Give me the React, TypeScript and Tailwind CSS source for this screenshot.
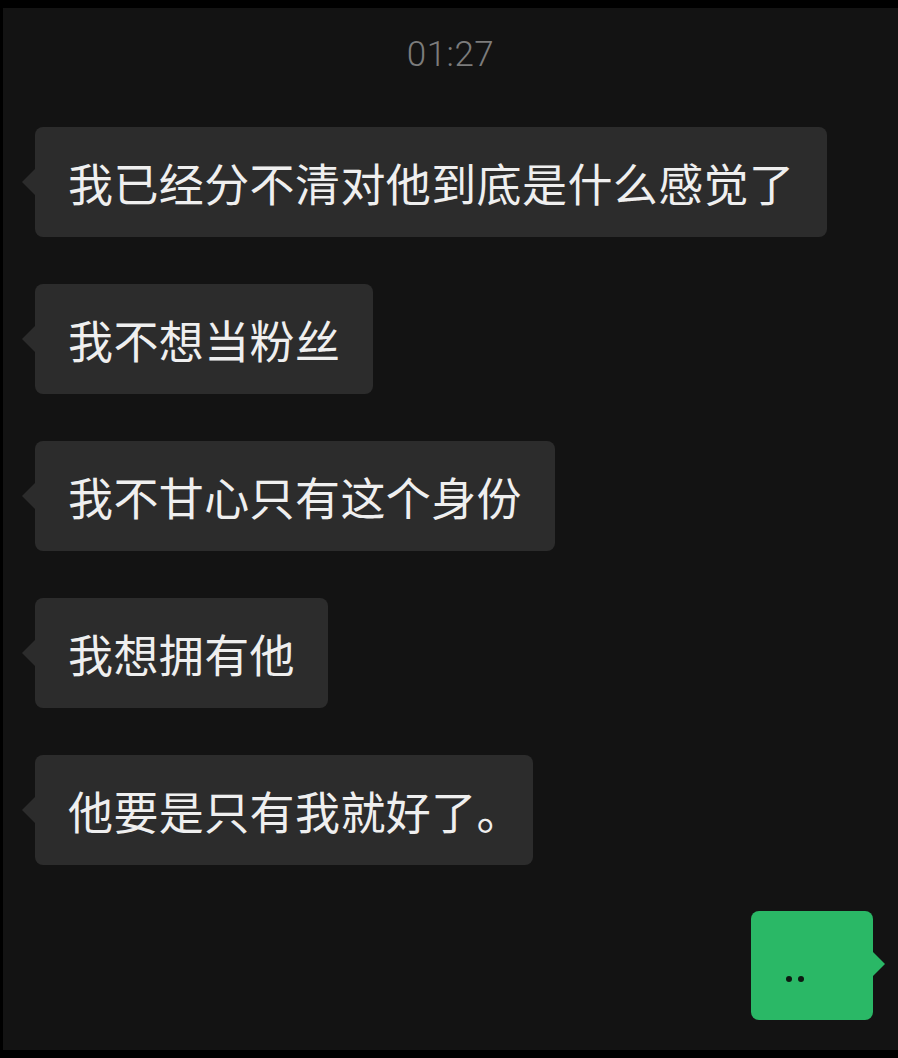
import React from 'react';

const messages = [
  '我已经分不清对他到底是什么感觉了',
  '我不想当粉丝',
  '我不甘心只有这个身份',
  '我想拥有他',
  '他要是只有我就好了。',
];

const Bubble = ({ text }: { text: string }) => (
  <div className="relative self-start ml-[32px] h-[110px] flex items-center px-[33px] rounded-lg bg-[#2c2c2c]">
    <span
      className="absolute left-[-13px] top-1/2 -translate-y-1/2 w-0 h-0 border-y-[14px] border-y-transparent border-r-[14px] border-r-[#2c2c2c]"
    />
    <span className="text-[45px] leading-none text-[#efefef] whitespace-nowrap tracking-[0.4px] [font-feature-settings:'halt']">
      {text}
    </span>
  </div>
);

export default function App() {
  return (
    <div
      className="w-[898px] h-[1058px] bg-black pt-[8px] pl-[3px] pb-[8px] overflow-hidden"
      style={{ fontFamily: '"Noto Sans CJK SC", "Noto Sans", sans-serif' }}
    >
      <div className="h-full bg-[#131313] flex flex-col">
        <div className="h-[94px] flex items-center justify-center">
          <span className="text-[35px] font-light text-[#7c7c7c] font-['Roboto',sans-serif] tracking-[0.5px]">
            01:27
          </span>
        </div>
        <div className="flex flex-col gap-[47px] mt-[25px]">
          {messages.map((m) => (
            <Bubble key={m} text={m} />
          ))}
        </div>
        <div className="relative self-end mr-[25px] mt-[46px] w-[122px] h-[109px] rounded-lg bg-[#2ab866] flex items-center">
          <span className="absolute right-[-12px] top-[40px] w-0 h-0 border-y-[13px] border-y-transparent border-l-[13px] border-l-[#2ab866]" />
          <div className="flex gap-[6px] ml-[35px] mt-[26px]">
            <span className="w-[6px] h-[6px] rounded-full bg-[#0d1a12]" />
            <span className="w-[6px] h-[6px] rounded-full bg-[#0d1a12]" />
          </div>
        </div>
      </div>
    </div>
  );
}
